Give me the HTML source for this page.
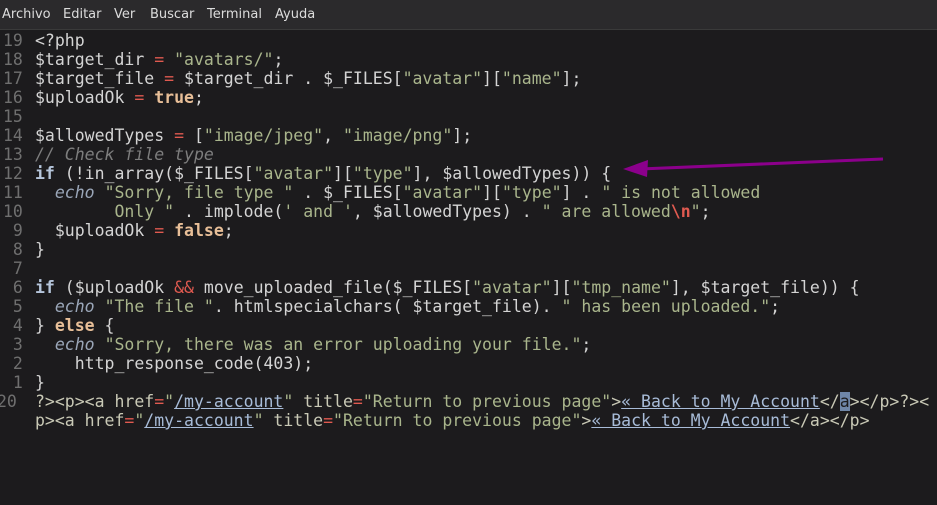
<!DOCTYPE html>
<html><head><meta charset="utf-8"><style>
html,body{margin:0;padding:0;width:937px;height:505px;overflow:hidden;background:#1c1b1d}
.menu{position:absolute;left:0;top:0;width:937px;height:29px;background:#2b2a2c;border-bottom:1px solid #3a3a3a;font:13px "DejaVu Sans","Liberation Sans",sans-serif;color:#dcdcdc}
.menu span{position:absolute;top:7px}
.code{position:absolute;left:0;top:31px;font:16.5px/19px "DejaVu Sans Mono","Liberation Mono",monospace;color:#d4d4d4}
.row{height:19px;white-space:pre}
.n{color:#6f6f6f;display:inline-block;width:35px;text-align:left;padding-left:3px;box-sizing:border-box}
.s{color:#a9b58c}.k{color:#b6c6dc;font-weight:bold}.b{color:#e8bf98;font-weight:bold}
.c{color:#7d7d7d;font-style:italic}.e{color:#9aa6b8;font-style:italic}.r{color:#e05a50}
.u{color:#a8bcd8;text-decoration:underline}.bs{color:#e05a50;font-weight:bold}
.w{color:#c9c9b6}
.sel{background:#6f86a8;color:#1c1b1d}
</style></head><body>
<div class="menu"><span style="left:2px">Archivo</span><span style="left:63px">Editar</span><span style="left:114px">Ver</span><span style="left:150px">Buscar</span><span style="left:207px">Terminal</span><span style="left:275px">Ayuda</span></div>
<div class="code"><div class="row"><span class="n">19</span>&lt;?php</div><div class="row"><span class="n">18</span>$target_dir <span class="r">=</span> <span class="s">"avatars/"</span>;</div><div class="row"><span class="n">17</span>$target_file <span class="r">=</span> $target_dir . $_FILES[<span class="s">"avatar"</span>][<span class="s">"name"</span>];</div><div class="row"><span class="n">16</span>$uploadOk <span class="r">=</span> <span class="b">true</span>;</div><div class="row"><span class="n">15</span></div><div class="row"><span class="n">14</span>$allowedTypes <span class="r">=</span> [<span class="s">"image/jpeg"</span>, <span class="s">"image/png"</span>];</div><div class="row"><span class="n">13</span><span class="c">// Check file type</span></div><div class="row"><span class="n">12</span><span class="k">if</span> (!in_array($_FILES[<span class="s">"avatar"</span>][<span class="s">"type"</span>], $allowedTypes)) {</div><div class="row"><span class="n">11</span>  <span class="e">echo</span> <span class="s">"Sorry, file type "</span> . $_FILES[<span class="s">"avatar"</span>][<span class="s">"type"</span>] . <span class="s">" is not allowed</span></div><div class="row"><span class="n">10</span><span class="s">        Only "</span> . implode(<span class="s">' and '</span>, $allowedTypes) . <span class="s">" are allowed</span><span class="bs">\n</span><span class="s">"</span>;</div><div class="row"><span class="n"> 9</span>  $uploadOk <span class="r">=</span> <span class="b">false</span>;</div><div class="row"><span class="n"> 8</span>}</div><div class="row"><span class="n"> 7</span></div><div class="row"><span class="n"> 6</span><span class="k">if</span> ($uploadOk <span class="r">&amp;&amp;</span> move_uploaded_file($_FILES[<span class="s">"avatar"</span>][<span class="s">"tmp_name"</span>], $target_file)) {</div><div class="row"><span class="n"> 5</span>  <span class="e">echo</span> <span class="s">"The file "</span>. htmlspecialchars( $target_file). <span class="s">" has been uploaded."</span>;</div><div class="row"><span class="n"> 4</span>} <span class="b">else</span> {</div><div class="row"><span class="n"> 3</span>  <span class="e">echo</span> <span class="s">"Sorry, there was an error uploading your file."</span>;</div><div class="row"><span class="n"> 2</span>    http_response_code(403);</div><div class="row"><span class="n"> 1</span>}</div><div class="row w"><span style="color:#6f6f6f;display:inline-block;width:35px;margin-left:-3px;box-sizing:border-box">20</span><span style="margin-left:3px"></span>?&gt;&lt;p&gt;&lt;a href<span class="r">=</span><span class="s">"</span><span class="u">/my-account</span><span class="s">"</span> title<span class="r">=</span><span class="s">"Return to previous page"</span>&gt;<span class="u">« Back to My Account</span>&lt;/<span class="sel">a</span>&gt;&lt;/p&gt;?&gt;&lt;</div><div class="row w"><span style="display:inline-block;width:35px"></span>p&gt;&lt;a href<span class="r">=</span><span class="s">"</span><span class="u">/my-account</span><span class="s">"</span> title<span class="r">=</span><span class="s">"Return to previous page"</span>&gt;<span class="u">« Back to My Account</span>&lt;/a&gt;&lt;/p&gt;</div></div>
<svg style="position:absolute;left:0;top:0" width="937" height="505">
<line x1="883" y1="159" x2="640" y2="169" stroke="#8b008b" stroke-width="3"/>
<polygon points="623,169 648,160 647,177" fill="#8b008b"/>
</svg>
</body></html>
